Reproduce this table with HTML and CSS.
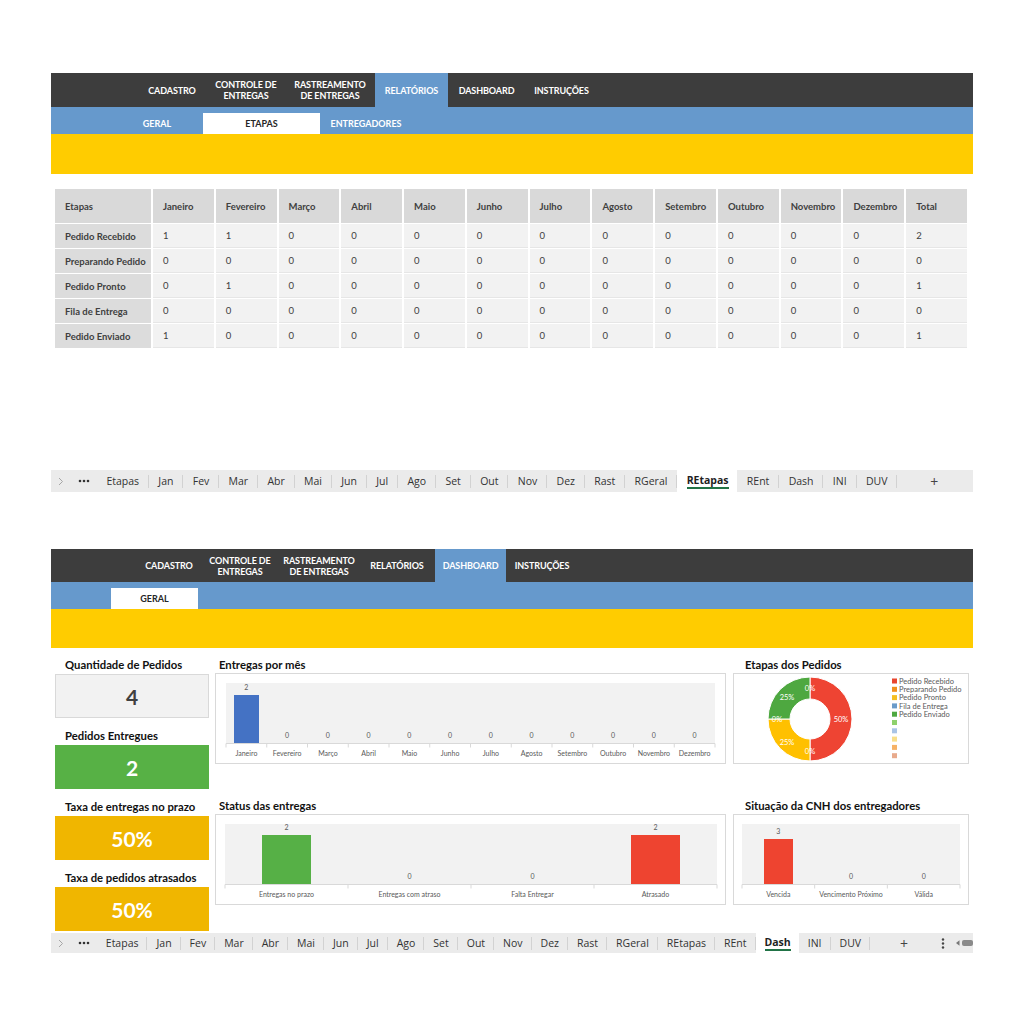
FILE: index.html
```html
<!DOCTYPE html>
<html lang="pt-BR">
<head>
<meta charset="utf-8">
<title>Controle de Entregas</title>
<link rel="stylesheet" href="styles.css">
</head>
<body>
<section class="app app-reports">
  <nav class="topnav topnav-reports">
    <span class="nav-item">CADASTRO</span>
    <span class="nav-item">CONTROLE DE<br>ENTREGAS</span>
    <span class="nav-item">RASTREAMENTO<br>DE ENTREGAS</span>
    <span class="nav-item active">RELATÓRIOS</span>
    <span class="nav-item">DASHBOARD</span>
    <span class="nav-item">INSTRUÇÕES</span>
  </nav>
  <div class="subnav subnav-reports">
    <span class="sub-item">GERAL</span>
    <span class="sub-item active">ETAPAS</span>
    <span class="sub-item">ENTREGADORES</span>
  </div>
  <div class="banner banner-reports"></div>
  <div class="sheet">
    <div class="grid">
      <div class="hd">Etapas</div><div class="hd">Janeiro</div><div class="hd">Fevereiro</div><div class="hd">Março</div><div class="hd">Abril</div><div class="hd">Maio</div><div class="hd">Junho</div><div class="hd">Julho</div><div class="hd">Agosto</div><div class="hd">Setembro</div><div class="hd">Outubro</div><div class="hd">Novembro</div><div class="hd">Dezembro</div><div class="hd">Total</div>
      <div class="lb">Pedido Recebido</div><div class="dc">1</div><div class="dc">1</div><div class="dc">0</div><div class="dc">0</div><div class="dc">0</div><div class="dc">0</div><div class="dc">0</div><div class="dc">0</div><div class="dc">0</div><div class="dc">0</div><div class="dc">0</div><div class="dc">0</div><div class="dc">2</div>
      <div class="lb">Preparando Pedido</div><div class="dc">0</div><div class="dc">0</div><div class="dc">0</div><div class="dc">0</div><div class="dc">0</div><div class="dc">0</div><div class="dc">0</div><div class="dc">0</div><div class="dc">0</div><div class="dc">0</div><div class="dc">0</div><div class="dc">0</div><div class="dc">0</div>
      <div class="lb">Pedido Pronto</div><div class="dc">0</div><div class="dc">1</div><div class="dc">0</div><div class="dc">0</div><div class="dc">0</div><div class="dc">0</div><div class="dc">0</div><div class="dc">0</div><div class="dc">0</div><div class="dc">0</div><div class="dc">0</div><div class="dc">0</div><div class="dc">1</div>
      <div class="lb">Fila de Entrega</div><div class="dc">0</div><div class="dc">0</div><div class="dc">0</div><div class="dc">0</div><div class="dc">0</div><div class="dc">0</div><div class="dc">0</div><div class="dc">0</div><div class="dc">0</div><div class="dc">0</div><div class="dc">0</div><div class="dc">0</div><div class="dc">0</div>
      <div class="lb">Pedido Enviado</div><div class="dc">1</div><div class="dc">0</div><div class="dc">0</div><div class="dc">0</div><div class="dc">0</div><div class="dc">0</div><div class="dc">0</div><div class="dc">0</div><div class="dc">0</div><div class="dc">0</div><div class="dc">0</div><div class="dc">0</div><div class="dc">1</div>
    </div>
  </div>
  <div class="tabbar tabbar-reports">
    <span class="tb-prev"><svg width="6" height="9" viewBox="0 0 6 9"><path d="M1 1l3.5 3.5L1 8" fill="none" stroke="#a6a6a6" stroke-width="1"/></svg></span>
    <span class="tb-more"><svg width="12" height="4" viewBox="0 0 12 4"><circle cx="2" cy="2" r="1.3" fill="#333"/><circle cx="6" cy="2" r="1.3" fill="#333"/><circle cx="10" cy="2" r="1.3" fill="#333"/></svg></span>
    <span class="tab">Etapas</span><span class="tab">Jan</span><span class="tab">Fev</span><span class="tab">Mar</span><span class="tab">Abr</span><span class="tab">Mai</span><span class="tab">Jun</span><span class="tab">Jul</span><span class="tab">Ago</span><span class="tab">Set</span><span class="tab">Out</span><span class="tab">Nov</span><span class="tab">Dez</span><span class="tab">Rast</span><span class="tab">RGeral</span><span class="tab active"><span class="tab-label">REtapas</span></span><span class="tab">REnt</span><span class="tab">Dash</span><span class="tab">INI</span><span class="tab">DUV</span>
    <span class="tb-add">+</span>
  </div>
</section>

<section class="app app-dash">
  <nav class="topnav topnav-dash">
    <span class="nav-item">CADASTRO</span>
    <span class="nav-item">CONTROLE DE<br>ENTREGAS</span>
    <span class="nav-item">RASTREAMENTO<br>DE ENTREGAS</span>
    <span class="nav-item">RELATÓRIOS</span>
    <span class="nav-item active">DASHBOARD</span>
    <span class="nav-item">INSTRUÇÕES</span>
  </nav>
  <div class="subnav subnav-dash">
    <span class="sub-item active">GERAL</span>
  </div>
  <div class="banner banner-dash"></div>
  <div class="dash">
    <div class="kpis">
      <div class="kpi"><div class="kpi-title">Quantidade de Pedidos</div><div class="kpi-box kpi-neutral">4</div></div>
      <div class="kpi"><div class="kpi-title">Pedidos Entregues</div><div class="kpi-box kpi-green">2</div></div>
      <div class="kpi"><div class="kpi-title">Taxa de entregas no prazo</div><div class="kpi-box kpi-yellow">50%</div></div>
      <div class="kpi"><div class="kpi-title">Taxa de pedidos atrasados</div><div class="kpi-box kpi-yellow">50%</div></div>
    </div>
    <div class="charts">
      <div class="card">
        <div class="card-title">Entregas por mês</div>
        <div class="card-box">
          <svg class="chart" width="509" height="89" viewBox="0 0 509 89">
            <rect x="10" y="9" width="489" height="60" fill="#f2f2f2"/>
            <path d="M10 69.5H499M10 69.5v4M50.75 69.5v4M91.5 69.5v4M132.25 69.5v4M173 69.5v4M213.75 69.5v4M254.5 69.5v4M295.25 69.5v4M336 69.5v4M376.75 69.5v4M417.5 69.5v4M458.25 69.5v4M499 69.5v4" stroke="#d9d9d9" stroke-width="1" fill="none"/>
            <rect x="18" y="21" width="25" height="48" fill="#4472c4"/>
            <g class="dl">
              <text x="30.4" y="15.5">2</text>
              <text x="71.1" y="63.5">0</text><text x="111.9" y="63.5">0</text><text x="152.6" y="63.5">0</text><text x="193.4" y="63.5">0</text><text x="234.1" y="63.5">0</text><text x="274.9" y="63.5">0</text><text x="315.6" y="63.5">0</text><text x="356.4" y="63.5">0</text><text x="397.1" y="63.5">0</text><text x="437.9" y="63.5">0</text><text x="478.6" y="63.5">0</text>
            </g>
            <g class="ax">
              <text x="30.4" y="81.5">Janeiro</text><text x="71.1" y="81.5">Fevereiro</text><text x="111.9" y="81.5">Março</text><text x="152.6" y="81.5">Abril</text><text x="193.4" y="81.5">Maio</text><text x="234.1" y="81.5">Junho</text><text x="274.9" y="81.5">Julho</text><text x="315.6" y="81.5">Agosto</text><text x="356.4" y="81.5">Setembro</text><text x="397.1" y="81.5">Outubro</text><text x="437.9" y="81.5">Novembro</text><text x="478.6" y="81.5">Dezembro</text>
            </g>
          </svg>
        </div>
      </div>
      <div class="card card-side">
        <div class="card-title">Etapas dos Pedidos</div>
        <div class="card-box">
          <svg class="chart" width="234" height="89" viewBox="0 0 234 89">
            <g stroke="#fff" stroke-width="1">
              <path d="M76 3A42 42 0 0 1 76 87L76 65A20 20 0 0 0 76 25Z" fill="#ee4433"/>
              <path d="M76 87A42 42 0 0 1 34 45L56 45A20 20 0 0 0 76 65Z" fill="#ffc000"/>
              <path d="M34 45A42 42 0 0 1 76 3L76 25A20 20 0 0 0 56 45Z" fill="#4ea840"/>
            </g>
            <g class="pl">
              <text x="107" y="47.5">50%</text>
              <text x="76" y="79.5">0%</text>
              <text x="53" y="70.5">25%</text>
              <text x="43" y="47.5">0%</text>
              <text x="53" y="25.5">25%</text>
              <text x="76" y="16.5">0%</text>
            </g>
            <rect x="158" y="4.5" width="5" height="5" fill="#e8452f"/>
            <rect x="158" y="12.8" width="5" height="5" fill="#f0901e"/>
            <rect x="158" y="21.1" width="5" height="5" fill="#f5bf22"/>
            <rect x="158" y="29.4" width="5" height="5" fill="#6a9bc9"/>
            <rect x="158" y="37.7" width="5" height="5" fill="#4ea840"/>
            <rect x="158" y="46" width="5" height="5" fill="#8fd16c"/>
            <rect x="158" y="54.3" width="5" height="5" fill="#a9c4e6"/>
            <rect x="158" y="62.6" width="5" height="5" fill="#f8de8a"/>
            <rect x="158" y="70.9" width="5" height="5" fill="#f6b266"/>
            <rect x="158" y="79.2" width="5" height="5" fill="#e8aa8c"/>
            <g class="lg">
              <text x="165" y="9.6">Pedido Recebido</text>
              <text x="165" y="17.9">Preparando Pedido</text>
              <text x="165" y="26.2">Pedido Pronto</text>
              <text x="165" y="34.5">Fila de Entrega</text>
              <text x="165" y="42.8">Pedido Enviado</text>
            </g>
          </svg>
        </div>
      </div>
      <div class="card">
        <div class="card-title">Status das entregas</div>
        <div class="card-box">
          <svg class="chart" width="509" height="89" viewBox="0 0 509 89">
            <rect x="9" y="9" width="492" height="60" fill="#f2f2f2"/>
            <path d="M9 69.5H501M9 69.5v4M132 69.5v4M255 69.5v4M378 69.5v4M501 69.5v4" stroke="#d9d9d9" stroke-width="1" fill="none"/>
            <rect x="46" y="20" width="49" height="49" fill="#56b046"/>
            <rect x="415" y="20" width="49" height="49" fill="#ee4430"/>
            <g class="dl">
              <text x="70.5" y="14.5">2</text>
              <text x="193.5" y="63.5">0</text>
              <text x="316.5" y="63.5">0</text>
              <text x="439.5" y="14.5">2</text>
            </g>
            <g class="ax">
              <text x="70.5" y="81.5">Entregas no prazo</text>
              <text x="193.5" y="81.5">Entregas com atraso</text>
              <text x="316.5" y="81.5">Falta Entregar</text>
              <text x="439.5" y="81.5">Atrasado</text>
            </g>
          </svg>
        </div>
      </div>
      <div class="card card-side">
        <div class="card-title">Situação da CNH dos entregadores</div>
        <div class="card-box">
          <svg class="chart" width="234" height="89" viewBox="0 0 234 89">
            <rect x="8" y="9" width="218" height="60" fill="#f2f2f2"/>
            <path d="M8 69.5H226M8 69.5v4M80.67 69.5v4M153.33 69.5v4M226 69.5v4" stroke="#d9d9d9" stroke-width="1" fill="none"/>
            <rect x="30" y="24" width="29" height="45" fill="#ee4430"/>
            <g class="dl">
              <text x="44.3" y="18.5">3</text>
              <text x="117" y="63.5">0</text>
              <text x="189.7" y="63.5">0</text>
            </g>
            <g class="ax">
              <text x="44.3" y="81.5">Vencida</text>
              <text x="117" y="81.5">Vencimento Próximo</text>
              <text x="189.7" y="81.5">Válida</text>
            </g>
          </svg>
        </div>
      </div>
    </div>
  </div>
  <div class="tabbar tabbar-dash">
    <span class="tb-prev"><svg width="6" height="9" viewBox="0 0 6 9"><path d="M1 1l3.5 3.5L1 8" fill="none" stroke="#a6a6a6" stroke-width="1"/></svg></span>
    <span class="tb-more"><svg width="12" height="4" viewBox="0 0 12 4"><circle cx="2" cy="2" r="1.3" fill="#333"/><circle cx="6" cy="2" r="1.3" fill="#333"/><circle cx="10" cy="2" r="1.3" fill="#333"/></svg></span>
    <span class="tab">Etapas</span><span class="tab">Jan</span><span class="tab">Fev</span><span class="tab">Mar</span><span class="tab">Abr</span><span class="tab">Mai</span><span class="tab">Jun</span><span class="tab">Jul</span><span class="tab">Ago</span><span class="tab">Set</span><span class="tab">Out</span><span class="tab">Nov</span><span class="tab">Dez</span><span class="tab">Rast</span><span class="tab">RGeral</span><span class="tab">REtapas</span><span class="tab">REnt</span><span class="tab active"><span class="tab-label">Dash</span></span><span class="tab">INI</span><span class="tab">DUV</span>
    <span class="tb-add">+</span>
    <span class="tb-kebab"><svg width="4" height="11" viewBox="0 0 4 11"><circle cx="2" cy="1.5" r="1.2" fill="#444"/><circle cx="2" cy="5.5" r="1.2" fill="#444"/><circle cx="2" cy="9.5" r="1.2" fill="#444"/></svg></span>
    <span class="tb-scroll"><svg width="18" height="8" viewBox="0 0 18 8"><path d="M1 4L4.5 1.2V6.8Z" fill="#777"/><rect x="7" y="1" width="11" height="6" rx="2" fill="#8a8a8a"/></svg></span>
  </div>
</section>
</body>
</html>
```

FILE: styles.css
```css
* { box-sizing: border-box; }

html, body {
  margin: 0;
  padding: 0;
  background: #ffffff;
}

body {
  font-family: Lato, "Liberation Sans", Arial, sans-serif;
  color: #262626;
}

.app {
  width: 922px;
  margin-left: 51px;
}

.app-reports { margin-top: 73px; }
.app-dash { margin-top: 57px; }

/* ---------- top navigation ---------- */
.topnav {
  display: grid;
  column-gap: 2px;
  background: #3d3d3d;
}

.topnav-reports {
  height: 34px;
  padding-left: 88px;
  grid-template-columns: 66px 78px 86px 73px 73px 73px;
}

.topnav-dash {
  height: 33px;
  padding-left: 86px;
  grid-template-columns: 64px 74px 80px 72px 71px 68px;
}

.nav-item {
  display: flex;
  align-items: center;
  justify-content: center;
  text-align: center;
  color: #ffffff;
  font-weight: 700;
  font-size: 9px;
  line-height: 11px;
  letter-spacing: -0.1px;
}

.nav-item.active { background: #6699cc; }

/* ---------- sub navigation ---------- */
.subnav {
  display: grid;
  height: 27px;
  padding-top: 6px;
  padding-left: 60px;
  background: #6699cc;
}

.subnav-reports { grid-template-columns: 92px 117px 92px; }
.subnav-dash { grid-template-columns: 87px; }

.sub-item {
  display: flex;
  align-items: center;
  justify-content: center;
  color: #ffffff;
  font-weight: 700;
  font-size: 9px;
}

.sub-item.active {
  background: #ffffff;
  color: #262626;
}

/* ---------- yellow band ---------- */
.banner { background: #ffcc00; }
.banner-reports { height: 40px; }
.banner-dash { height: 39px; }

/* ---------- report sheet ---------- */
.sheet {
  height: 296px;
  padding: 15px 0 0 4px;
}

.grid {
  display: grid;
  width: 912px;
  grid-template-columns: 96px repeat(13, 1fr);
  grid-template-rows: 34px repeat(5, 24px);
  column-gap: 2px;
  row-gap: 1px;
  font-size: 9.5px;
  color: #404040;
}

.grid > div {
  display: flex;
  align-items: center;
  padding-left: 10px;
  white-space: nowrap;
}

.hd {
  background: #d9d9d9;
  font-weight: 700;
}

.lb {
  background: #dcdcdc;
  font-weight: 700;
}

.dc {
  background: #f2f2f2;
  border-bottom: 1px solid #e6e6e6;
}

/* ---------- sheet tab bar ---------- */
.tabbar {
  display: flex;
  align-items: center;
  background: #ebebeb;
  font-family: "Open Sans", Lato, sans-serif;
  color: #333333;
}

.tabbar-reports { height: 22px; font-size: 10.5px; }
.tabbar-dash { height: 20px; font-size: 10.5px; }

.tb-prev {
  width: 20px;
  display: flex;
  justify-content: center;
}

.tb-more {
  width: 26px;
  display: flex;
  justify-content: center;
}

.tab {
  height: 13px;
  line-height: 13px;
  padding: 0 8.9px 0 9.4px;
  border-right: 1px solid #d2d2d2;
  white-space: nowrap;
}

.tabbar-dash .tab { padding: 0 8px 0 9px; }

.tab.active {
  align-self: stretch;
  height: auto;
  display: flex;
  align-items: center;
  background: #ffffff;
  border-right: none;
  font-weight: 700;
  color: #1f1f1f;
}

.tab-label {
  line-height: 13px;
  border-bottom: 2px solid #217346;
}

.tb-add {
  width: 18px;
  margin-left: 28px;
  text-align: center;
  font-size: 14px;
  color: #444444;
}

.tabbar-dash .tb-add { margin-left: 25px; }

.tb-kebab {
  margin-left: 28px;
  display: flex;
}

.tb-scroll {
  margin-left: 10px;
  display: flex;
}

/* ---------- dashboard ---------- */
.dash {
  display: flex;
  gap: 6px;
  height: 285px;
  padding: 8px 0 0 4px;
  overflow: hidden;
}

.kpis {
  width: 154px;
  display: flex;
  flex-direction: column;
  gap: 9px;
  flex-shrink: 0;
}

.kpi-title {
  height: 17px;
  line-height: 17px;
  margin-bottom: 1px;
  padding-left: 10px;
  font-weight: 700;
  font-size: 11.3px;
  color: #111111;
  white-space: nowrap;
}

.kpi-box {
  height: 44px;
  display: flex;
  align-items: center;
  justify-content: center;
  font-weight: 700;
  font-size: 21px;
  color: #ffffff;
}

.kpi-neutral {
  background: #f2f2f2;
  border: 1px solid #d9d9d9;
  color: #404040;
}

.kpi-green { background: #57b145; }
.kpi-yellow { background: #f0b600; }

.charts {
  display: grid;
  grid-template-columns: 511px 236px;
  grid-template-rows: 108px 108px;
  column-gap: 7px;
  row-gap: 33px;
}

.card-title {
  height: 17px;
  line-height: 17px;
  padding-left: 4px;
  font-weight: 700;
  font-size: 11.3px;
  color: #111111;
  white-space: nowrap;
}

.card-side .card-title { padding-left: 12px; }

.card-box {
  height: 91px;
  border: 1px solid #d9d9d9;
  background: #ffffff;
}

.chart { display: block; }

.chart text {
  font-family: Lato, "Liberation Sans", sans-serif;
}

.dl text {
  font-size: 7px;
  fill: #595959;
  text-anchor: middle;
}

.ax text {
  font-size: 7px;
  fill: #595959;
  text-anchor: middle;
}

.pl text {
  font-size: 7.5px;
  fill: #ffffff;
  text-anchor: middle;
}

.lg text {
  font-size: 7.5px;
  fill: #595959;
}
```
